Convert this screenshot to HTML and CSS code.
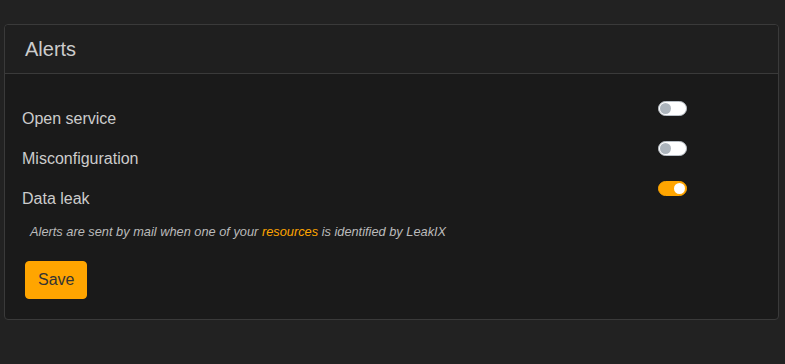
FILE: index.html
```html
<!DOCTYPE html>
<html lang="en">
<head>
    <meta charset="UTF-8">
    <meta name="viewport" content="width=device-width, initial-scale=1.0">
    <title>Alerts</title>
    <link rel="stylesheet" href="styles.css">
</head>
<body>
    <div class="card">
        <div class="card-header">
            <h5>Alerts</h5>
        </div>
        <div class="card-body">
            <div class="alert-row">
                <label for="openService">Open service</label>
                <input type="checkbox" class="switch" id="openService">
            </div>
            <div class="alert-row">
                <label for="misconfig">Misconfiguration</label>
                <input type="checkbox" class="switch" id="misconfig">
            </div>
            <div class="alert-row">
                <label for="dataLeak">Data leak</label>
                <input type="checkbox" class="switch" id="dataLeak" checked>
            </div>
            <p class="note">Alerts are sent by mail when one of your <a href="#">resources</a> is identified by LeakIX</p>
            <button class="btn-save">Save</button>
        </div>
    </div>
</body>
</html>
```

FILE: styles.css
```css
body {
    font-family: 'Liberation Sans', Arial, sans-serif;
    margin: 0;
    padding: 24px 6px 44px 4px;
    background-color: #222222;
    color: #cccccc;
}
.card {
    background-color: #1a1a1a;
    border: 1px solid #3a3a3a;
    border-radius: 4px;
}
.card-header {
    background-color: #1f1f1f;
    padding: 12px 20px;
    border-bottom: 1px solid #3a3a3a;
    border-radius: 4px 4px 0 0;
}
.card-header h5 {
    margin: 0;
    font-size: 20px;
    font-weight: 400;
    line-height: 24px;
    color: #cccccc;
}
.card-body {
    padding: 20px;
}
.alert-row {
    display: grid;
    grid-template-columns: 636px auto;
    height: 40px;
    margin-left: -3px;
}
.alert-row label {
    font-size: 16px;
    line-height: 24px;
    margin-top: 13px;
    color: #cccccc;
}
.switch {
    appearance: none;
    -webkit-appearance: none;
    box-sizing: border-box;
    width: 29px;
    height: 15px;
    margin: 7px 0 0 0;
    border: 1px solid #b8bfc6;
    border-radius: 8px;
    background-color: #ffffff;
    position: relative;
    cursor: pointer;
}
.switch::after {
    content: '';
    position: absolute;
    top: 1px;
    left: 1px;
    width: 11px;
    height: 11px;
    border-radius: 50%;
    background-color: #adb5bd;
}
.switch:checked {
    background-color: #ffa500;
    border-color: #ffa500;
}
.switch:checked::after {
    left: auto;
    right: 1px;
    background-color: #ffffff;
}
.note {
    margin: 8px 0 19px 5px;
    font-size: 12.8px;
    line-height: 20px;
    font-style: italic;
    color: #bbbbbb;
}
.note a {
    color: #ffa500;
    text-decoration: none;
}
.btn-save {
    font-family: inherit;
    background-color: #ffa500;
    color: #333333;
    padding: 6px 12px;
    border: 1px solid #ffa500;
    border-radius: 4px;
    font-size: 16px;
    line-height: 24px;
    cursor: pointer;
}
```
